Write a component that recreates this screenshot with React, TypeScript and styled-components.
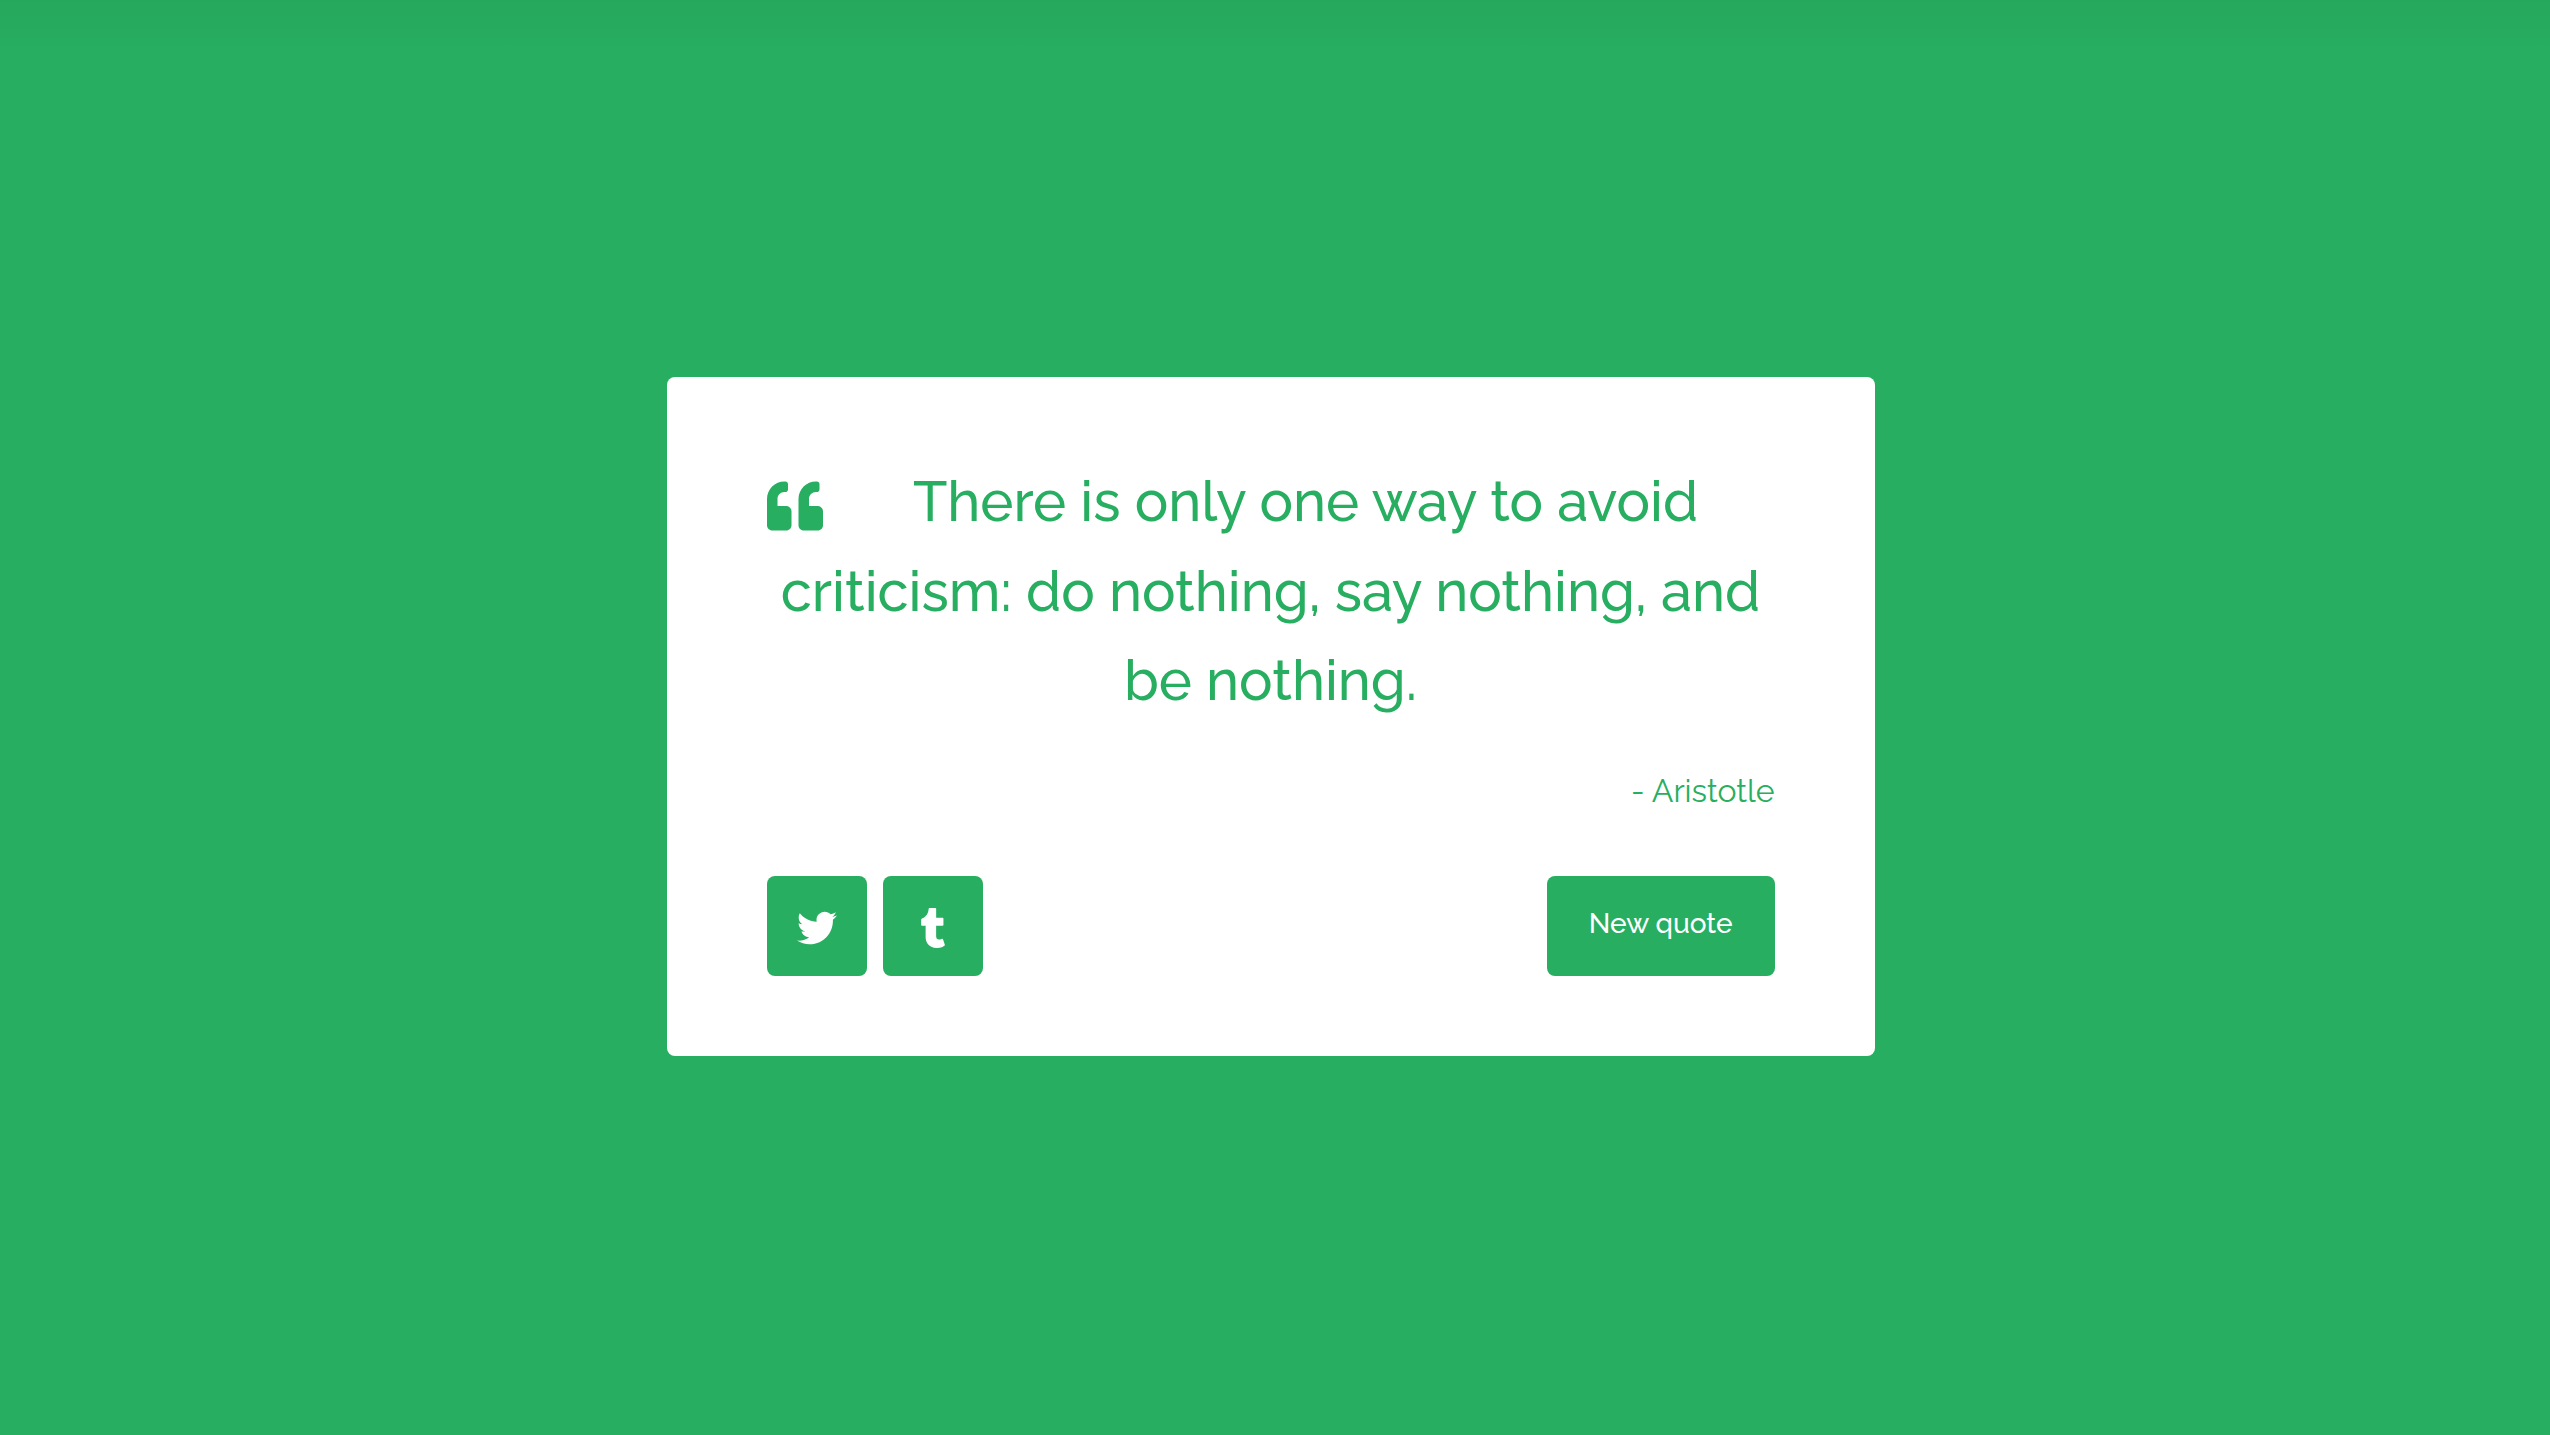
import React, { useState } from "react";
import styled, { createGlobalStyle } from "styled-components";
import { FaQuoteLeft, FaTumblr, FaTwitter } from "react-icons/fa";

const GREEN = "#27ae60";

const quotes = [
  {
    text: "There is only one way to avoid criticism: do nothing, say nothing, and be nothing.",
    author: "Aristotle",
  },
];

const GlobalStyle = createGlobalStyle`
  *, *::before, *::after { box-sizing: border-box; }
  body {
    margin: 0;
    background: ${GREEN};
    color: ${GREEN};
    font-family: Raleway, Lato, "Open Sans", sans-serif;
  }
`;

const Page = styled.main`
  min-height: 100vh;
  display: flex;
  align-items: center;
  justify-content: center;
  padding: 0 24px 2px 15px;
  background: linear-gradient(rgba(0, 0, 0, 0.04), rgba(0, 0, 0, 0) 50px);
`;

const Card = styled.figure`
  width: 100%;
  max-width: 1208px;
  margin: 0;
  padding: 80px 100px;
  border-radius: 8px;
  background: #fff;
`;

const Quote = styled.blockquote`
  margin: 0;
  font-size: 56px;
  font-weight: 500;
  line-height: 1.6;
  text-align: center;
`;

const QuoteMark = styled(FaQuoteLeft)`
  float: left;
  width: 56px;
  height: 56px;
  margin: 21px 14px 0 0;
`;

const Author = styled.figcaption`
  margin-top: 40px;
  font-size: 32px;
  line-height: 50px;
  text-align: right;
`;

const Actions = styled.div`
  display: flex;
  gap: 16px;
  margin-top: 60px;
`;

const ShareLink = styled.a`
  display: flex;
  align-items: center;
  justify-content: center;
  width: 100px;
  height: 100px;
  padding-top: 4px;
  border-radius: 8px;
  background: ${GREEN};
  color: #fff;
  font-size: 40px;
`;

const NewQuoteButton = styled.button`
  height: 100px;
  margin-left: auto;
  padding: 0 42px 4px;
  border: 0;
  border-radius: 8px;
  background: ${GREEN};
  color: #fff;
  font-family: inherit;
  font-size: 28px;
  font-weight: 500;
  cursor: pointer;
`;

export default function App() {
  const [index, setIndex] = useState(0);
  const quote = quotes[index];

  return (
    <>
      <GlobalStyle />
      <Page>
        <Card>
          <Quote>
            <QuoteMark aria-hidden />
            {quote.text}
          </Quote>
          <Author>- {quote.author}</Author>
          <Actions>
            <ShareLink href="#twitter" aria-label="Tweet this quote">
              <FaTwitter />
            </ShareLink>
            <ShareLink href="#tumblr" aria-label="Post this quote on Tumblr">
              <FaTumblr />
            </ShareLink>
            <NewQuoteButton
              type="button"
              onClick={() => setIndex((index + 1) % quotes.length)}
            >
              New quote
            </NewQuoteButton>
          </Actions>
        </Card>
      </Page>
    </>
  );
}
